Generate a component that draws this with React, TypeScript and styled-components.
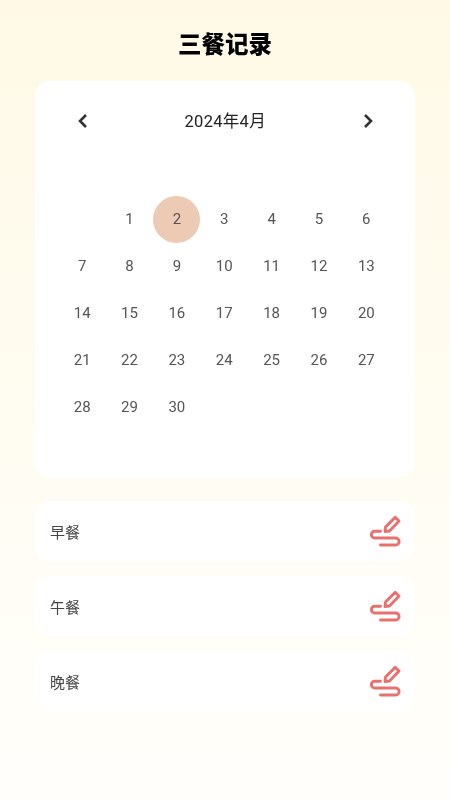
import * as React from 'react';
import styled, { createGlobalStyle } from 'styled-components';

const GlobalStyle = createGlobalStyle`
  html, body {
    margin: 0;
    padding: 0;
  }
  body {
    font-family: Roboto, 'Noto Sans CJK SC', sans-serif;
  }
`

const Page = styled.div`
  width: 450px;
  height: 800px;
  box-sizing: border-box;
  padding: 28px 35px 0;
  background: linear-gradient(180deg, #fff9e6 0%, #fffef9 90%, #fffefa 100%);
  overflow: hidden;
`

const Title = styled.h1`
  margin: 0 0 18px;
  height: 35px;
  line-height: 35px;
  font-size: 23.5px;
  font-weight: 900;
  text-align: center;
  color: #000;
  will-change: transform;
`

const CalendarCard = styled.div`
  height: 396px;
  box-sizing: border-box;
  padding: 23px 25px 0 23.5px;
  background: #fff;
  border-radius: 15px;
  margin-bottom: 24px;
  will-change: transform;
`

const MonthBar = styled.div`
  display: flex;
  align-items: center;
  justify-content: space-between;
  height: 32px;
  padding: 0 12px 0 14px;
  margin-bottom: 59.5px;
`

const MonthLabel = styled.span`
  font-size: 16.5px;
  font-weight: 400;
  letter-spacing: 0.3px;
  color: #222;
`

const NavIcon = styled.svg`
  width: 20px;
  height: 20px;
  fill: none;
  stroke: #333;
  stroke-width: 2.6;
`

const DayGrid = styled.div`
  display: grid;
  grid-template-columns: repeat(7, 1fr);
  grid-auto-rows: 47px;
`

const Day = styled.div<{ $selected?: boolean }>`
  display: flex;
  align-items: center;
  justify-content: center;
  width: 47px;
  height: 47px;
  justify-self: center;
  border-radius: 50%;
  font-size: 15px;
  font-weight: 400;
  color: #555;
  background: ${({ $selected }) => ($selected ? '#eccab3' : 'transparent')};
`

const MealList = styled.div`
  display: flex;
  flex-direction: column;
  gap: 15px;
`

const MealRow = styled.div`
  display: flex;
  align-items: center;
  justify-content: space-between;
  height: 60px;
  box-sizing: border-box;
  padding: 0 15px;
  background: #fff;
  border-radius: 15px;
  font-size: 15px;
  color: #444;
  will-change: transform;
`

const PenIcon = () => (
  <svg width="30" height="30" viewBox="0 0 30 30" fill="none" stroke="#e8716e" strokeWidth="2.9" strokeLinecap="round" strokeLinejoin="round" overflow="visible">
    <path d="M15 15.5 L15.5 11 L25.2 1.4 L29 5 L19.5 15 Z" />
    <path d="M10.5 15.3 H4.7 A3.35 3.35 0 0 0 4.7 22 H25.6 A3.5 3.5 0 0 1 25.6 29 H10.5" />
  </svg>
)

const days = Array.from({ length: 30 }, (_, i) => i + 1)
const meals = ['早餐', '午餐', '晚餐']

const App = () => (
  <Page>
    <GlobalStyle />
    <Title>三餐记录</Title>
    <CalendarCard>
      <MonthBar>
        <NavIcon viewBox="0 0 20 20"><path d="M13 5 L7 11 L13 17" /></NavIcon>
        <MonthLabel>2024年4月</MonthLabel>
        <NavIcon viewBox="0 0 20 20"><path d="M7 5 L13 11 L7 17" /></NavIcon>
      </MonthBar>
      <DayGrid>
        <div />
        {days.map((d) => (
          <Day key={d} $selected={d === 2}>{d}</Day>
        ))}
      </DayGrid>
    </CalendarCard>
    <MealList>
      {meals.map((m) => (
        <MealRow key={m}>
          {m}
          <PenIcon />
        </MealRow>
      ))}
    </MealList>
  </Page>
)

export default App;
